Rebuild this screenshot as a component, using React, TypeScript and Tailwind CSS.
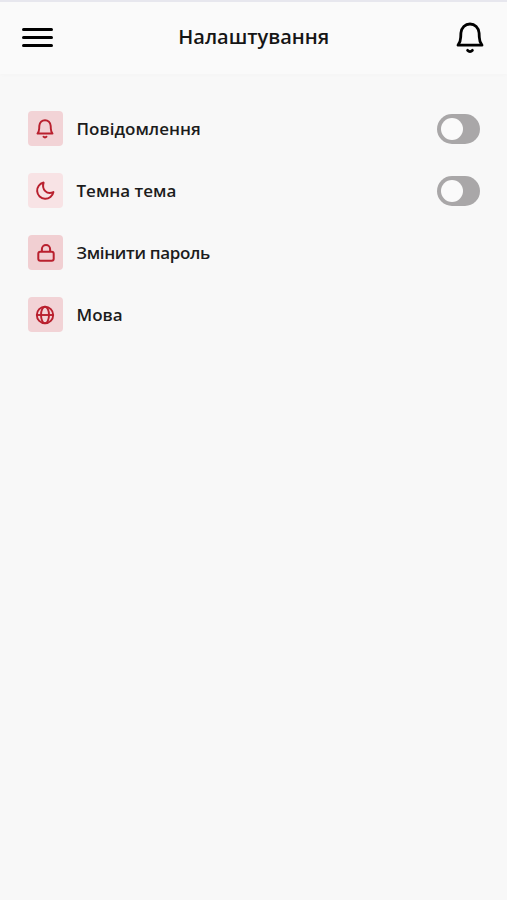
import React from 'react';

type IconProps = { className?: string };

const BellIcon: React.FC<IconProps & { strokeWidth?: number }> = ({ className, strokeWidth = 2.8 }) => (
  <svg viewBox="0 0 28 32" fill="none" stroke="currentColor" strokeWidth={strokeWidth} strokeLinecap="round" strokeLinejoin="round" className={className}>
    <path d="M2 23.2h24c-1.800-2.200-2.600-4.500-2.700-8l-.2-4.200C22.700 5.600 18.800 2 14 2s-8.700 3.600-9.100 9l-.2 4.200C4.600 18.700 3.800 21 2 23.200z" />
    <path d="M11.600 28.300c1.400 1.700 3.400 1.700 4.800 0" />
  </svg>
);

const MoonIcon: React.FC<IconProps> = ({ className }) => (
  <svg viewBox="0 0 20 20" fill="none" stroke="currentColor" strokeWidth="2" strokeLinejoin="round" className={className}>
    <path d="M8.600 1.600A8.200 8.200 0 1 0 18.400 11.100c-3 1.400-6.200.9-8.100-1C8.300 8.100 7.500 4.900 8.600 1.600z" />
  </svg>
);

const LockIcon: React.FC<IconProps> = ({ className }) => (
  <svg viewBox="0 0 18 20" fill="none" stroke="currentColor" strokeWidth="2" className={className}>
    <rect x="1.300" y="8.800" width="15.400" height="9" rx="2" />
    <path d="M4.900 8.800V6a4.100 4.100 0 0 1 8.200 0v2.800" />
  </svg>
);

const GlobeIcon: React.FC<IconProps> = ({ className }) => (
  <svg viewBox="0 0 20 20" fill="none" stroke="currentColor" strokeWidth="1.900" className={className}>
    <circle cx="10" cy="10" r="8.200" />
    <ellipse cx="10" cy="10" rx="4" ry="8.200" />
    <path d="M1.800 10h16.400" />
  </svg>
);

const Toggle: React.FC<{ label: string }> = ({ label }) => {
  const [on, setOn] = React.useState(false);

  return (
    <button
      role="switch"
      aria-checked={on}
      aria-label={label}
      onClick={() => setOn(!on)}
      className={`ml-auto flex h-[30px] w-[43px] items-center rounded-full px-1 ${on ? 'justify-end bg-[#b91c2b]' : 'bg-[#a9a7a8]'}`}
    >
      <span className="size-[22px] rounded-full bg-[#fafafa]" />
    </button>
  );
};

const items = [
  { label: 'Повідомлення', tile: 'bg-[#f2d3d6]', text: 'tracking-[0.02px]', toggle: true, icon: <BellIcon strokeWidth={3.1} className="h-5 w-[18px]" /> },
  { label: 'Темна тема', tile: 'bg-[#f8e3e5]', text: 'tracking-normal', toggle: true, icon: <MoonIcon className="size-5" /> },
  { label: 'Змінити пароль', tile: 'bg-[#f1cfd2]', text: 'tracking-[-0.33px]', toggle: false, icon: <LockIcon className="ml-px h-5 w-[18px]" /> },
  { label: 'Мова', tile: 'bg-[#f2d3d6]', text: 'tracking-normal', toggle: false, icon: <GlobeIcon className="size-5" /> },
];

const App: React.FC = () => {
  return (
    <div className="min-h-screen bg-[#f8f8f8] font-['Open_Sans',sans-serif] text-[#1c1c1c]">
      <header className="flex h-[74px] items-center justify-between border-t-2 border-[#e7e7ee] bg-[#fafafa] pr-[22.5px] pb-0.5 pl-[22px] shadow-[0_1px_4px_rgba(0,0,0,0.02)]">
        <button aria-label="Меню" className="flex w-[31px] flex-col gap-[5px] text-black">
          <span className="h-[3px] rounded-full bg-current" />
          <span className="h-[3px] rounded-full bg-current" />
          <span className="h-[3px] rounded-full bg-current" />
        </button>
        <h1 className="-ml-0.5 text-[20px] leading-6 font-semibold whitespace-nowrap text-[#151515]">Налаштування</h1>
        <button aria-label="Сповіщення" className="pt-px text-black">
          <BellIcon className="h-8 w-7" />
        </button>
      </header>

      <ul className="flex flex-col gap-[27px] pt-[37px] pr-[27px] pl-7">
        {items.map((item) => (
          <li key={item.label} className="flex h-[35px] items-center">
            <div className={`flex size-[35px] items-center justify-center rounded-[4px] pr-px text-[#b9202e] ${item.tile}`}>
              {item.icon}
            </div>
            <span className={`ml-[13.500px] text-[17px] leading-6 font-semibold whitespace-nowrap ${item.text}`}>{item.label}</span>
            {item.toggle && <Toggle label={item.label} />}
          </li>
        ))}
      </ul>
    </div>
  );
};

export default App;
